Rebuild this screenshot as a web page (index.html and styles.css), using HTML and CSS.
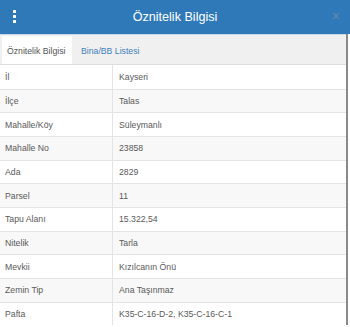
FILE: index.html
```html
<!DOCTYPE html>
<html>
<head>
<meta charset="utf-8">
<link rel="stylesheet" href="styles.css">
</head>
<body>
<div class="panel">
  <div class="header">
    <span class="kebab"><i></i><i></i><i></i></span>
    <span class="title">Öznitelik Bilgisi</span>
    <span class="close">×</span>
  </div>
  <div class="body">
    <div class="tabs">
      <div class="tab active">Öznitelik Bilgisi</div>
      <div class="tab link">Bina/BB Listesi</div>
    </div>
    <table class="attrs">
      <tr><td>İl</td><td>Kayseri</td></tr>
      <tr><td>İlçe</td><td>Talas</td></tr>
      <tr><td>Mahalle/Köy</td><td>Süleymanlı</td></tr>
      <tr><td>Mahalle No</td><td>23858</td></tr>
      <tr><td>Ada</td><td>2829</td></tr>
      <tr><td>Parsel</td><td>11</td></tr>
      <tr><td>Tapu Alanı</td><td>15.322,54</td></tr>
      <tr><td>Nitelik</td><td>Tarla</td></tr>
      <tr><td>Mevkii</td><td>Kızılcanın Önü</td></tr>
      <tr><td>Zemin Tip</td><td>Ana Taşınmaz</td></tr>
      <tr><td>Pafta</td><td>K35-C-16-D-2, K35-C-16-C-1</td></tr>
    </table>
  </div>
</div>
</body>
</html>
```
FILE: styles.css
```css
html, body {
  margin: 0;
  padding: 0;
  background: #fff;
  font-family: "Liberation Sans", Arial, sans-serif;
}
.panel {
  width: 350px;
  height: 327px;
  overflow: hidden;
}
.header {
  height: 34px;
  background: #3079b8;
  display: flex;
  align-items: center;
  justify-content: center;
  position: relative;
  color: #fff;
}
.title {
  font-size: 12.6px;
}
.kebab {
  position: absolute;
  left: 13px;
  top: 10px;
  display: flex;
  flex-direction: column;
  gap: 2px;
}
.kebab i {
  display: block;
  width: 3px;
  height: 3px;
  background: #fff;
  border-radius: 0.5px;
}
.close {
  position: absolute;
  right: 10px;
  top: 9px;
  font-size: 14px;
  color: #6189b3;
  line-height: 14px;
}
.body {
  border-right: 2px solid #8a8a8a;
  width: 346px;
}
.tabs {
  height: 29px;
  background: #f0f0f0;
  border-top: 1px solid #c9d8e8;
  border-bottom: 1px solid #dcdcdc;
  display: flex;
  align-items: stretch;
  padding-left: 2px;
}
.tab {
  font-size: 8.7px;
  display: flex;
  align-items: center;
  padding: 2px 6px 0 5px;
}
.tab.active {
  background: #fff;
  color: #555;
  width: 59px;
  margin-top: 1px;
}
.tab.link {
  color: #3f7fc0;
  padding-left: 9px;
}
.attrs {
  width: 346px;
  border-collapse: collapse;
  font-size: 8.7px;
  color: #5a5a5a;
}
.attrs td {
  height: 22.7px;
  padding: 0 0 0 5px;
  border-top: 1px solid #e4e4e4;
  vertical-align: middle;
}
.attrs tr:first-child td {
  border-top: none;
  height: 23.5px;
}
.attrs td:first-child {
  width: 107px;
  border-right: 1px solid #e4e4e4;
}
.attrs td + td {
  padding-left: 6px;
}
.attrs tr:nth-child(even) td {
  background: #f8f8f8;
}
```
